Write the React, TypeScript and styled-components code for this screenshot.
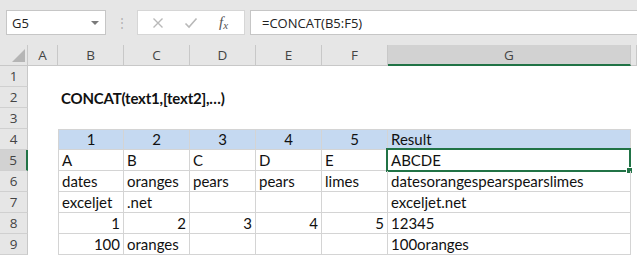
import React from 'react';
import styled, { createGlobalStyle } from 'styled-components';

const green = '#217346';
const gridLine = '#d4d4d4';
const headerBg = '#e6e6e6';

const GlobalStyle = createGlobalStyle`
  html, body {
    margin: 0;
    padding: 0;
    background: #ffffff;
    overflow: hidden;
  }
`;

const Window = styled.div`
  width: 637px;
  height: 258px;
  overflow: hidden;
  background: #ffffff;
`;

const FormulaBar = styled.div`
  height: 45px;
  box-sizing: border-box;
  padding: 10px 0 10px 6px;
  display: flex;
  align-items: stretch;
  background: ${headerBg};
  font-family: 'Open Sans', 'Liberation Sans', sans-serif;
  font-size: 13px;
  color: #222;
`;

const NameBox = styled.div`
  width: 100px;
  box-sizing: border-box;
  border: 1px solid #c6c6c6;
  background: #fff;
  display: flex;
  align-items: center;
  justify-content: space-between;
  padding: 0 6px 0 5px;
`;

const Caret = styled.span`
  width: 0;
  height: 0;
  border-left: 4px solid transparent;
  border-right: 4px solid transparent;
  border-top: 4px solid #7a7a7a;
`;

const Grip = styled.div`
  width: 31px;
  display: flex;
  align-items: center;
  justify-content: center;
  color: #b0b0b0;
  font-size: 12px;
`;

const FxButtons = styled.div`
  width: 108px;
  box-sizing: border-box;
  border: 1px solid #d6d6d6;
  background: #fff;
  display: flex;
  align-items: center;
  justify-content: space-around;
  padding: 0 4px;
`;

const FxIcon = styled.span<{ $dim?: boolean }>`
  display: flex;
  align-items: center;
  justify-content: center;
  width: 24px;
  color: ${(p) => (p.$dim ? '#b9b9b9' : '#555')};
  font-family: 'Liberation Serif', serif;
  font-style: italic;
  font-size: 15px;
`;

const FormulaInput = styled.div`
  flex: 1;
  margin-left: 5px;
  border: 1px solid #c6c6c6;
  border-right: none;
  background: #fff;
  display: flex;
  align-items: center;
  padding-left: 11px;
`;

const Sheet = styled.div`
  display: grid;
  grid-template-columns: 28px 30px repeat(5, 66px) 243px 1fr;
  grid-auto-rows: 21px;
  font-family: 'Lato', 'Liberation Sans', sans-serif;
  font-size: 15px;
  color: #111;
`;

const Corner = styled.div`
  background: ${headerBg};
  border-right: 1px solid #c8c8c8;
  border-bottom: 1px solid #c8c8c8;
  display: flex;
  align-items: flex-end;
  justify-content: flex-end;
  padding: 0 2px 3px 0;
`;

const ColHeader = styled.div<{ $active?: boolean }>`
  box-sizing: border-box;
  background: ${(p) => (p.$active ? '#d2d2d2' : headerBg)};
  border-right: 1px solid #c8c8c8;
  border-bottom: ${(p) => (p.$active ? `2px solid ${green}` : '1px solid #c8c8c8')};
  display: flex;
  align-items: center;
  justify-content: center;
  font-family: 'Open Sans', 'Liberation Sans', sans-serif;
  font-size: 13.5px;
  color: #444;
`;

const RowHeader = styled.div<{ $active?: boolean }>`
  box-sizing: border-box;
  background: ${(p) => (p.$active ? '#d2d2d2' : headerBg)};
  border-right: ${(p) => (p.$active ? `2px solid ${green}` : '1px solid #c8c8c8')};
  border-bottom: 1px solid #d0d0d0;
  display: flex;
  align-items: center;
  justify-content: center;
  font-family: 'Open Sans', 'Liberation Sans', sans-serif;
  font-size: 13.5px;
  color: #444;
`;

const Cell = styled.div<{
  $boxed?: boolean;
  $top?: boolean;
  $left?: boolean;
  $fill?: boolean;
  $align?: 'left' | 'right' | 'center';
}>`
  position: relative;
  box-sizing: border-box;
  display: flex;
  align-items: flex-end;
  justify-content: ${(p) =>
    p.$align === 'right' ? 'flex-end' : p.$align === 'center' ? 'center' : 'flex-start'};
  padding: 0 3px 1px 3px;
  white-space: nowrap;
  background: ${(p) => (p.$fill ? '#c5d9f1' : 'transparent')};
  border-right: ${(p) => (p.$boxed ? `1px solid ${gridLine}` : 'none')};
  border-bottom: ${(p) => (p.$boxed ? `1px solid ${gridLine}` : 'none')};
  border-top: ${(p) => (p.$top ? `1px solid ${gridLine}` : 'none')};
  border-left: ${(p) => (p.$left ? `1px solid ${gridLine}` : 'none')};
`;

const Title = styled(Cell)`
  grid-column: span 4;
  font-weight: 700;
  font-size: 15px;
  letter-spacing: -0.2px;
`;

const Selection = styled.div`
  position: absolute;
  left: -2px;
  top: -2px;
  right: -1px;
  bottom: -2px;
  border: 2px solid ${green};
  pointer-events: none;

  &::after {
    content: '';
    position: absolute;
    right: -4px;
    bottom: -4px;
    width: 5px;
    height: 5px;
    background: ${green};
    border: 1px solid #fff;
  }
`;

const columns = ['A', 'B', 'C', 'D', 'E', 'F', 'G', ''];

type CellData = { v: string; right?: boolean };

const table: CellData[][] = [
  [{ v: 'A' }, { v: 'B' }, { v: 'C' }, { v: 'D' }, { v: 'E' }, { v: 'ABCDE' }],
  [
    { v: 'dates' },
    { v: 'oranges' },
    { v: 'pears' },
    { v: 'pears' },
    { v: 'limes' },
    { v: 'datesorangespearspearslimes' },
  ],
  [{ v: 'exceljet' }, { v: '.net' }, { v: '' }, { v: '' }, { v: '' }, { v: 'exceljet.net' }],
  [
    { v: '1', right: true },
    { v: '2', right: true },
    { v: '3', right: true },
    { v: '4', right: true },
    { v: '5', right: true },
    { v: '12345' },
  ],
  [{ v: '100', right: true }, { v: 'oranges' }, { v: '' }, { v: '' }, { v: '' }, { v: '100oranges' }],
];

const headings = ['1', '2', '3', '4', '5', 'Result'];

function Blank() {
  return (
    <>
      <Cell />
      <Cell />
      <Cell />
      <Cell />
      <Cell />
      <Cell />
      <Cell />
      <Cell />
    </>
  );
}

export default function App() {
  return (
    <Window>
      <GlobalStyle />
      <FormulaBar>
        <NameBox>
          <span>G5</span>
          <Caret />
        </NameBox>
        <Grip>⋮</Grip>
        <FxButtons>
          <FxIcon $dim>
            <svg width='12' height='12' viewBox='0 0 12 12'>
              <path d='M1.5 1.5 L10.5 10.5 M10.5 1.5 L1.5 10.5' stroke='currentColor' strokeWidth='1.4' />
            </svg>
          </FxIcon>
          <FxIcon $dim>
            <svg width='14' height='12' viewBox='0 0 14 12'>
              <path d='M1.5 6.5 L5 10 L12.5 1.5' stroke='currentColor' strokeWidth='1.6' fill='none' />
            </svg>
          </FxIcon>
          <FxIcon>
            f<span style={{ fontSize: 11, marginTop: 4 }}>x</span>
          </FxIcon>
        </FxButtons>
        <FormulaInput>=CONCAT(B5:F5)</FormulaInput>
      </FormulaBar>

      <Sheet>
        <Corner>
          <svg width='13' height='13' viewBox='0 0 13 13'>
            <polygon points='13,0 13,13 0,13' fill='#b5b5b5' />
          </svg>
        </Corner>
        {columns.map((c, i) => (
          <ColHeader key={i} $active={c === 'G'}>
            {c}
          </ColHeader>
        ))}

        <RowHeader>1</RowHeader>
        <Blank />

        <RowHeader>2</RowHeader>
        <Cell />
        <Title>CONCAT(text1,[text2],…)</Title>
        <Cell />
        <Cell />
        <Cell />

        <RowHeader>3</RowHeader>
        <Blank />

        <RowHeader>4</RowHeader>
        <Cell />
        {headings.map((h, i) => (
          <Cell key={h} $boxed $fill $top $left={i === 0} $align={i < 5 ? 'center' : 'left'}>
            {h}
          </Cell>
        ))}
        <Cell />

        {table.map((row, r) => (
          <React.Fragment key={r}>
            <RowHeader $active={r === 0}>{r + 5}</RowHeader>
            <Cell />
            {row.map((cell, c) => (
              <Cell key={c} $boxed $left={c === 0} $align={cell.right ? 'right' : 'left'}>
                {cell.v}
                {r === 0 && c === 5 && <Selection />}
              </Cell>
            ))}
            <Cell />
          </React.Fragment>
        ))}
      </Sheet>
    </Window>
  );
}
